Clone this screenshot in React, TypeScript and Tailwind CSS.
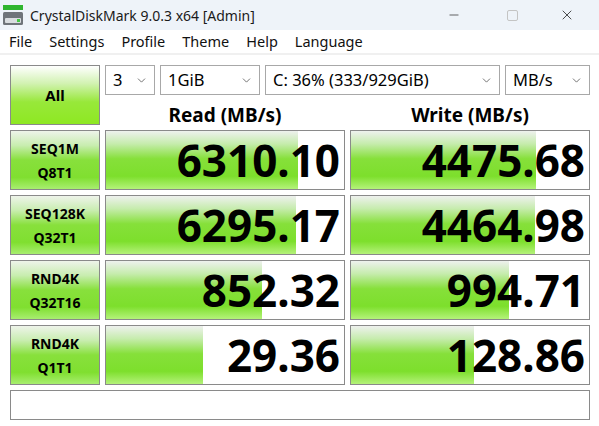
import { ChevronDown, Minus, X } from 'lucide-react';

type Result = { line1: string; line2: string; read: string; readPct: number; write: string; writePct: number };

const results: Result[] = [
  { line1: 'SEQ1M', line2: 'Q8T1', read: '6310.10', readPct: 80.7, write: '4475.68', writePct: 77.7 },
  { line1: 'SEQ128K', line2: 'Q32T1', read: '6295.17', readPct: 79.8, write: '4464.98', writePct: 77.3 },
  { line1: 'RND4K', line2: 'Q32T16', read: '852.32', readPct: 65.5, write: '994.71', writePct: 66.4 },
  { line1: 'RND4K', line2: 'Q1T1', read: '29.36', readPct: 40.8, write: '128.86', writePct: 51.7 },
];

const menus = ['File', 'Settings', 'Profile', 'Theme', 'Help', 'Language'];

const Logo = () => (
  <svg width="22" height="22" viewBox="0 0 22 22">
    <rect x="1" y="1" width="20" height="5" fill="#2fb52f" />
    <rect x="1" y="8" width="20" height="13" rx="1.5" fill="#6f747a" />
    <rect x="3" y="14" width="16" height="5" rx="1" fill="#d9dde0" />
    <rect x="15" y="15" width="3" height="3" fill="#46c846" />
  </svg>
);

const Select = ({ value, className }: { value: string; className: string }) => (
  <div
    className={`flex h-[30px] items-center justify-between border border-[#a8a8a8] bg-white pl-[7px] pr-[6px] text-[16.5px] text-black ${className}`}
  >
    <span>{value}</span>
    <ChevronDown className="h-[13px] w-[13px] text-[#555]" strokeWidth={1.5} />
  </div>
);

const ScoreCell = ({ value, pct }: { value: string; pct: number }) => (
  <div className="relative h-[60px] overflow-hidden border border-[#8a8a8a] bg-white">
    <div
      className="absolute inset-y-0 left-0 bg-[linear-gradient(to_bottom,#eef1ee_0%,#c6ecad_22%,#86e03a_48%,#7ddf2c_78%,#b4f27a_100%)]"
      style={{ width: `${pct}%` }}
    />
    <div className="relative flex h-full items-center justify-end pr-[4px] text-[44px] leading-none font-bold text-black">
      {value}
    </div>
  </div>
);

export default function App() {
  return (
    <div className="h-[426px] w-[599px] overflow-hidden bg-white font-['Noto_Sans',sans-serif] text-black">
      {/* title bar */}
      <div className="flex h-[30px] items-center bg-[#eef3f9]">
        <div className="ml-[2px] flex w-[28px] items-center">
          <Logo />
        </div>
        <span className="text-[14px] text-[#1a1a1a]">CrystalDiskMark 9.0.3 x64 [Admin]</span>
        <div className="ml-auto flex h-full items-center">
          <div className="flex w-[58px] justify-center">
            <Minus className="h-[14px] w-[14px] text-[#222]" strokeWidth={1.2} />
          </div>
          <div className="flex w-[58px] justify-center">
            <div className="h-[11px] w-[11px] rounded-[2px] border border-[#c4c4c4]" />
          </div>
          <div className="flex w-[58px] justify-center pr-[6px]">
            <X className="h-[16px] w-[16px] text-[#222]" strokeWidth={1.2} />
          </div>
        </div>
      </div>

      {/* menu */}
      <div className="flex h-[25px] items-center gap-[17px] border-b-2 border-[#f0f0f0] pl-[9px] text-[14.5px] text-[#111]">
        {menus.map((m) => (
          <span key={m}>{m}</span>
        ))}
      </div>

      {/* main grid */}
      <div className="grid grid-cols-[90px_240px_240px] gap-[5px] pl-[10px] pt-[10px]">
        <div className="flex h-[60px] items-center justify-center border border-[#8a8a8a] bg-[linear-gradient(to_bottom,#ffffff_0%,#d2f2b2_30%,#98e83a_62%,#8ee822_100%)] text-[15px] font-bold">
          All
        </div>
        <div className="col-span-2 flex flex-col">
          <div className="flex gap-[5px]">
            <Select value="3" className="w-[50px]" />
            <Select value="1GiB" className="w-[100px]" />
            <Select value="C: 36% (333/929GiB)" className="w-[235px]" />
            <Select value="MB/s" className="w-[85px]" />
          </div>
          <div className="grid flex-1 grid-cols-2 gap-[5px] text-[19px] leading-none font-bold">
            <div className="flex items-end justify-center">Read (MB/s)</div>
            <div className="flex items-end justify-center">Write (MB/s)</div>
          </div>
        </div>

        {results.map((r) => (
          <div key={r.line1 + r.line2} className="contents">
            <div className="flex h-[60px] flex-col items-center justify-center gap-[5px] border border-[#8a8a8a] bg-[linear-gradient(to_bottom,#eef4ea_0%,#c8edaf_25%,#88e03c_50%,#80df30_80%,#a8ee70_100%)] text-[14px] leading-[19px] font-bold">
              <span>{r.line1}</span>
              <span>{r.line2}</span>
            </div>
            <ScoreCell value={r.read} pct={r.readPct} />
            <ScoreCell value={r.write} pct={r.writePct} />
          </div>
        ))}

        <div className="col-span-3 h-[30px] border border-[#8a8a8a] bg-white" />
      </div>
    </div>
  );
}
